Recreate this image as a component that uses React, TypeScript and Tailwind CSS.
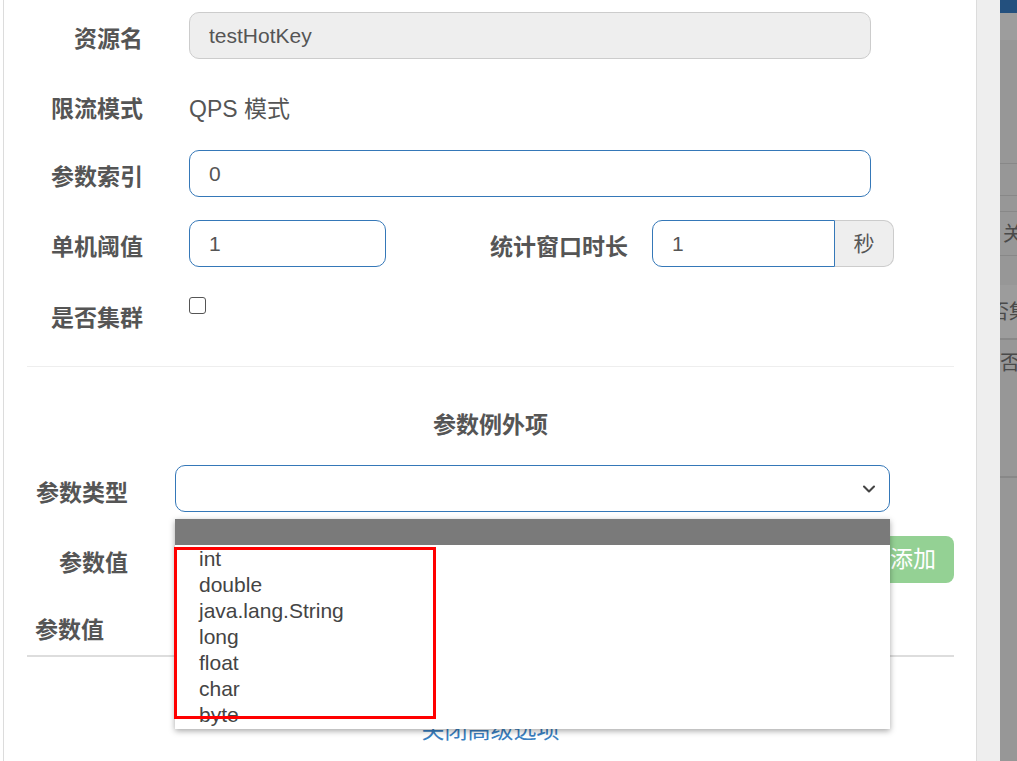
import { ChevronDown } from "lucide-react";

const sans = "font-['Liberation_Sans','Noto_Sans_CJK_SC',sans-serif]";
const label = "font-bold text-[23px] text-[#555] text-right whitespace-nowrap";
const field = "h-[47px] rounded-[10px] border px-[19px] text-[21px] text-[#555] flex items-center";
const active = `${field} border-[#3578b8] bg-white`;
const muted = `${field} border-[#cccccc] bg-[#eeeeee]`;

const options = ["", "int", "double", "java.lang.String", "long", "float", "char", "byte"];

const App = () => {
  return (
    <div className={`relative flex w-[1017px] h-[761px] overflow-hidden bg-white ${sans}`}>
      {/* modal */}
      <div className="ml-[3px] w-[974px] h-full border-l border-r border-[#dcdcdc] bg-white pl-[23px] pr-[22px] pt-[12px]">
        <div className="flex h-[47px] items-center">
          <div className={`w-[116px] pt-[7px] ${label}`}>资源名</div>
          <div className={`ml-[46px] w-[682px] ${muted}`}>testHotKey</div>
        </div>

        <div className="mt-[27px] flex h-[46px] items-center">
          <div className={`w-[116px] ${label}`}>限流模式</div>
          <div className="ml-[46px] text-[23px] text-[#555]">QPS 模式</div>
        </div>

        <div className="mt-[18px] flex h-[47px] items-center">
          <div className={`w-[116px] pt-[7px] ${label}`}>参数索引</div>
          <div className={`ml-[46px] w-[682px] ${active}`}>0</div>
        </div>

        <div className="mt-[23px] flex h-[47px] items-center">
          <div className={`w-[116px] pt-[7px] ${label}`}>单机阈值</div>
          <div className={`ml-[46px] w-[197px] ${active}`}>1</div>
          <div className={`w-[242px] pt-[7px] ${label}`}>统计窗口时长</div>
          <div className="ml-[24px] flex">
            <div className="flex h-[47px] w-[183px] items-center rounded-l-[10px] border border-[#3578b8] bg-white px-[19px] text-[21px] text-[#555]">
              1
            </div>
            <div className="flex h-[47px] w-[59px] items-center justify-center rounded-r-[10px] border border-l-0 border-[#cccccc] bg-[#eeeeee] text-[21px] text-[#555]">
              秒
            </div>
          </div>
        </div>

        <div className="mt-[23px] flex h-[47px] items-start">
          <div className={`w-[116px] pt-[12px] leading-[32px] ${label}`}>是否集群</div>
          <div className="ml-[46px] mt-[7px] h-[17px] w-[17px] rounded-[3px] border-[1.5px] border-[#555] bg-white" />
        </div>

        <div className="mt-[29px] border-t border-[#eeeeee]" />

        <div className="mt-[42px] text-center text-[23px] font-bold leading-[32px] text-[#555]">参数例外项</div>

        <div className="mt-[24px] flex h-[47px] items-center">
          <div className={`w-[101px] pt-[9px] ${label}`}>参数类型</div>
          <div className={`ml-[47px] w-[715px] ${active} justify-end pr-[10px]`}>
            <ChevronDown className="h-[20px] w-[20px] text-[#444]" strokeWidth={2.5} />
          </div>
        </div>

        <div className="mt-[24px] flex h-[47px] items-center">
          <div className={`w-[101px] pt-[7px] ${label}`}>参数值</div>
          <div className={`ml-[47px] w-[660px] ${active}`} />
          <button className="ml-auto h-[47px] w-[82px] rounded-[8px] bg-[#94d194] text-[23px] text-white">添加</button>
        </div>

        <div className="mt-[31px] border-b-2 border-[#dddddd] pb-[9px] pl-[8px] text-[23px] font-bold leading-[32px] text-[#555]">
          参数值
        </div>

        <div className="mt-[57px] text-center text-[23px] leading-[32px] text-[#3a7fc1]">关闭高级选项</div>
      </div>

      {/* scroll track */}
      <div className="h-full w-[23px] bg-[#eeeeee]" />

      {/* page behind the backdrop */}
      <div className="flex h-full w-[17px] flex-col overflow-hidden bg-[#979797] text-[20px] leading-none text-[#4a4a4a]">
        <div className="h-[13px] shrink-0 bg-[#23507e]" />
        <div className="h-[27px] shrink-0 bg-[#9d9d9d]" />
        <div className="h-[123px] shrink-0" />
        <div className="h-[32px] shrink-0 border-t border-[#888]" />
        <div className="h-[16px] shrink-0 border-t border-[#888]" />
        <div className="flex h-[44px] shrink-0 items-center whitespace-nowrap border-t border-[#888] pl-[3px]">关闭</div>
        <div className="h-[30px] shrink-0 border-t border-[#888]" />
        <div className="flex h-[53px] shrink-0 items-center whitespace-nowrap bg-[#9c9c9c]">
          <span className="ml-[-11px]">否集群</span>
        </div>
        <div className="flex h-[48px] shrink-0 items-center whitespace-nowrap border-t-2 border-[#888]">否</div>
        <div className="h-[90px] shrink-0" />
        <div className="flex-1 border-t-2 border-[#888]" />
      </div>

      {/* native select popup */}
      <div className="absolute left-[175px] top-[519px] w-[715px] bg-white pb-[2px] shadow-[0_2px_6px_rgba(0,0,0,0.35)]">
        {options.map((o, i) => (
          <div
            key={i}
            className={`flex h-[26px] items-center pl-[24px] text-[21px] leading-none ${i === 0 ? "bg-[#7a7a7a]" : "text-[#444]"}`}
          >
            {o}
          </div>
        ))}
      </div>

      {/* annotation */}
      <div className="absolute left-[174px] top-[547px] h-[172px] w-[262px] border-[3px] border-[#ff0000]" />
    </div>
  );
};

export default App;
